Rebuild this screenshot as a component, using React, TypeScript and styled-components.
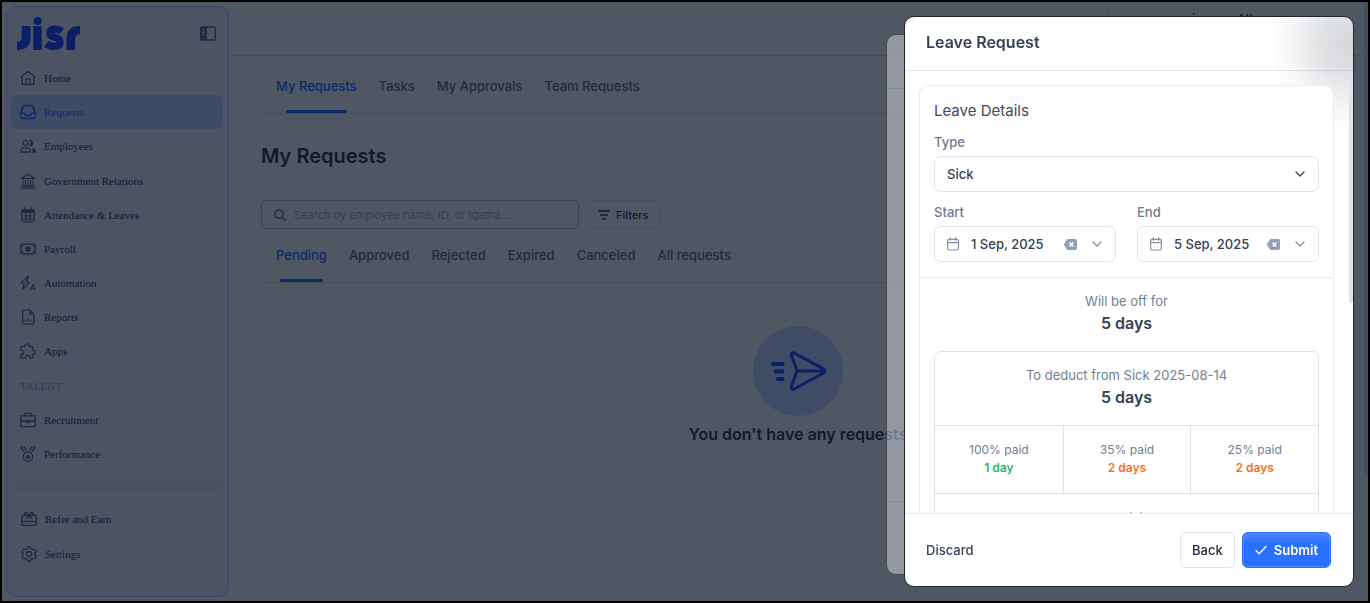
import React from "react";
import styled, { createGlobalStyle, css } from "styled-components";

const sans = `Inter, "Open Sans", "Liberation Sans", sans-serif`;
const serif = `"Liberation Serif", serif`;

const c = {
  page: "#4f5763",
  side: "#4c5362",
  sideLine: "#37476f",
  active: "#3f4b64",
  blue: "#0b2a6f",
  logo: "#0a1f66",
  ink: "#101a2e",
  inkSoft: "#212b3d",
  line: "#454d5a",
};

const Global = createGlobalStyle`
  * { box-sizing: border-box; }
  html, body { margin: 0; height: 100%; }
  body { background: #000; font-family: ${sans}; }
  button, input, select { font-family: inherit; margin: 0; }
  h1, h2, h3, p { margin: 0; }
`;

const Shell = styled.div`
  display: flex;
  height: 100vh;
  min-height: 600px;
  border: 2px solid #000;
  background: ${c.page};
  overflow: hidden;
`;

const Sidebar = styled.aside`
  display: flex;
  flex-direction: column;
  flex: 0 0 223px;
  margin: 4px 3px 4px 4px;
  padding: 10px 5px 25px 4px;
  border: 1px solid ${c.sideLine};
  border-radius: 10px;
  background: ${c.side};
`;

const SideHead = styled.div`
  display: flex;
  justify-content: space-between;
  height: 34px;
  margin: 0 7px 10px 6px;
  color: ${c.inkSoft};
`;

const PlainButton = styled.button`
  display: inline-flex;
  align-items: center;
  justify-content: center;
  flex: none;
  padding: 0;
  border: 0;
  background: none;
  color: inherit;
  cursor: pointer;
`;

const Nav = styled.nav`
  display: flex;
  flex-direction: column;
  flex: 1;
`;

const NavLink = styled.a<{ $active?: boolean }>`
  display: flex;
  align-items: center;
  flex: 1;
  gap: 8px;
  padding: 0 9px;
  border-radius: 7px;
  font: 400 11px/16px ${serif};
  color: ${(p) => (p.$active ? c.blue : c.ink)};
  background: ${(p) => (p.$active ? c.active : "transparent")};
  text-decoration: none;
  svg {
    flex: none;
    color: ${(p) => (p.$active ? c.blue : c.inkSoft)};
  }
`;

const NavHeading = styled.div`
  display: flex;
  align-items: center;
  flex: 1;
  padding: 0 9px;
  font: 400 11px/16px ${serif};
  color: #353d50;
`;

const Fade = styled.div`
  height: 20px;
  margin-bottom: 10px;
  border-radius: 0 0 10px 10px;
  background: linear-gradient(#4c5362, #495060);
`;

const SideFoot = styled.nav`
  display: flex;
  flex-direction: column;
  height: 70px;
  padding-left: 1px;
`;

const Main = styled.main`
  display: flex;
  flex-direction: column;
  flex: 1;
  min-width: 0;
`;

const TopBar = styled.header`
  display: flex;
  flex: none;
  justify-content: flex-end;
  height: 54px;
  padding: 7px 0;
  border-bottom: 1px solid ${c.line};
`;

const Profile = styled.div`
  width: 256px;
  padding: 1px 0 0 83px;
  border-left: 1px solid #424a58;
  font: 500 13px/18px ${sans};
  color: ${c.ink};
`;

const Content = styled.div`
  padding: 0 29px;
`;

const TabBar = styled.nav<{ $short?: boolean }>`
  display: flex;
  gap: 22px;
  height: ${(p) => (p.$short ? 54 : 58)}px;
  padding: ${(p) => (p.$short ? 16 : 20)}px 15px 0;
  border-bottom: 1px solid ${c.line};
`;

const Tab = styled.a<{ $active?: boolean; $inset?: string }>`
  position: relative;
  font: 500 13px/20px ${sans};
  color: ${(p) => (p.$active ? c.blue : c.inkSoft)};
  text-decoration: none;
  white-space: nowrap;
  ${(p) =>
    p.$active &&
    css`
      &::after {
        content: "";
        position: absolute;
        bottom: 0;
        left: ${p.$inset};
        right: ${p.$inset};
        height: 3px;
        border-radius: 2px;
        background: ${c.blue};
      }
    `}
`;

const Title = styled.h1`
  margin: 29px 0 31px;
  font: 600 20px/26px ${sans};
  color: ${c.ink};
`;

const Tools = styled.div`
  display: flex;
  gap: 7px;
`;

const Search = styled.label`
  display: flex;
  align-items: center;
  gap: 8px;
  width: 318px;
  height: 29px;
  padding: 0 12px;
  border: 1px solid #3a4558;
  border-radius: 5px;
  color: ${c.inkSoft};
  input {
    flex: 1;
    min-width: 0;
    padding: 0;
    border: 0;
    outline: 0;
    background: none;
    font: 400 11px/16px ${sans};
    color: ${c.ink};
  }
  input::placeholder {
    color: #353e50;
    opacity: 1;
  }
`;

const FilterButton = styled.button`
  display: flex;
  align-items: center;
  gap: 6px;
  height: 29px;
  padding: 0 11px;
  border: 1px solid #48505e;
  border-radius: 7px;
  background: none;
  font: 500 11px/16px ${sans};
  color: ${c.ink};
`;

const Empty = styled.section`
  display: flex;
  flex-direction: column;
  align-items: center;
  gap: 7px;
  padding-top: 43px;
  font: 600 16px/22px ${sans};
  color: ${c.ink};
`;

const Disc = styled.div`
  display: grid;
  place-items: center;
  width: 90px;
  height: 90px;
  border-radius: 50%;
  background: #404b66;
  color: ${c.logo};
`;

const PageScroll = styled.div`
  width: 4px;
  height: 79%;
  background: #464d5f;
`;

const Layer = styled.div`
  position: fixed;
  inset: 16px 16px 16px auto;
  width: 450px;
`;

const GhostPanel = styled.div`
  position: absolute;
  top: 18px;
  bottom: 12px;
  left: -18px;
  width: 60px;
  border: 1px solid #434a56;
  border-radius: 10px;
  background: rgba(222, 224, 230, 0.48);
  &::before,
  &::after {
    content: "";
    position: absolute;
    left: 0;
    right: 0;
    height: 1px;
    background: #868b98;
  }
  &::before {
    top: 53px;
  }
  &::after {
    bottom: 72px;
  }
`;

const Dialog = styled.section`
  position: relative;
  display: flex;
  flex-direction: column;
  height: 100%;
  border: 1px solid #20262f;
  border-radius: 10px;
  background: #fff;
  overflow: hidden;
`;

const Smudge = styled.div`
  position: absolute;
  top: -64px;
  right: -76px;
  width: 160px;
  height: 180px;
  background: radial-gradient(
    closest-side,
    rgba(92, 98, 110, 0.25),
    rgba(92, 98, 110, 0.19) 35%,
    rgba(92, 98, 110, 0.06) 72%,
    rgba(92, 98, 110, 0)
  );
`;

const DialogHead = styled.header`
  flex: none;
  height: 54px;
  padding: 13px 21px;
  border-bottom: 1px solid #e2e7ed;
  h2 {
    font: 600 16px/24px ${sans};
    color: #374151;
  }
`;

const Body = styled.div`
  position: relative;
  flex: 1;
  min-height: 0;
  padding: 14px 19px 0 14px;
  overflow: hidden;
`;

const BodyScroll = styled.div`
  position: absolute;
  top: 0;
  right: 0;
  width: 4px;
  height: 232px;
  border-radius: 2px;
  background: #dfe2e8;
`;

const Card = styled.div`
  position: relative;
  border: 1px solid #e9ebee;
  border-radius: 10px;
  background: #fff;
`;

const FormPart = styled.div`
  padding: 14px 14px 15px;
  border-bottom: 1px solid #e5e8ec;
  h3 {
    font: 400 15px/22px ${sans};
    color: #3f4a5c;
  }
`;

const Label = styled.label`
  display: block;
  padding: 11px 0 5px;
  font: 500 13px/18px ${sans};
  color: #6e7b8f;
`;

const Control = styled.div<{ $strong?: boolean }>`
  display: flex;
  align-items: center;
  gap: 12px;
  height: 36px;
  padding: 0 13px 0 12px;
  border: 1px solid #e0e5ec;
  border-radius: 7px;
  background: #fff;
  color: ${(p) => (p.$strong ? "#374151" : "#8491a5")};
  svg {
    flex: none;
  }
  button {
    margin-right: 3px;
  }
  select,
  input {
    flex: 1;
    width: 0;
    min-width: 0;
    padding: 0;
    border: 0;
    outline: 0;
    appearance: none;
    background: none;
    font: 500 13px/20px ${sans};
    color: #374151;
  }
`;

const DateRow = styled.div`
  display: grid;
  grid-template-columns: 1fr 1fr;
  gap: 21px;
`;

const Total = styled.div`
  padding: 13px 0 16px;
  text-align: center;
  font: 400 13px/20px ${sans};
  color: #727e90;
  strong {
    display: block;
    font: 600 16px/24px ${sans};
    color: #374151;
  }
`;

const Deduct = styled.div`
  margin: 0 14px 14px;
  border: 1px solid #dfe3e9;
  border-radius: 7px;
`;

const Split = styled.div`
  display: grid;
  grid-template-columns: repeat(3, 1fr);
  border-top: 1px solid #dfe3e9;
  border-bottom: 1px solid #dfe3e9;
`;

const Rate = styled.div<{ $tone: string }>`
  padding: 15px 0 16px;
  text-align: center;
  font: 400 12px/18px ${sans};
  color: #727e90;
  & + & {
    border-left: 1px solid #dfe3e9;
  }
  strong {
    display: block;
    font: 600 12px/18px ${sans};
    color: ${(p) => p.$tone};
  }
`;

const Rest = styled(Total)`
  padding-top: 14px;
`;

const DialogFoot = styled.footer`
  display: flex;
  align-items: center;
  flex: none;
  gap: 7px;
  height: 73px;
  padding: 0 22px 0 21px;
  border-top: 1px solid #e5e8ec;
`;

const Discard = styled(PlainButton)`
  margin-right: auto;
  font: 500 13px/20px ${sans};
  color: #374151;
`;

const Button = styled.button<{ $primary?: boolean }>`
  display: flex;
  align-items: center;
  gap: 7px;
  height: 36px;
  padding: 0 11px;
  border-radius: 6px;
  border: 1px solid #e0e5ec;
  background: #fff;
  font: 500 13px/20px ${sans};
  color: #222c3c;
  ${(p) =>
    p.$primary &&
    css`
      padding: 0 12px;
      border-color: #2a6df5;
      background: linear-gradient(#4a84ff, #2a70ff 35%, #2a70ff);
      box-shadow: inset 0 0 0 1px #4f88ff;
      font-weight: 600;
      color: #fff;
    `}
`;

type IconProps = { w?: number; h?: number; sw?: number; children: React.ReactNode };

const Icon = ({ w = 16, h = 16, sw = 1.3, children }: IconProps) => (
  <svg
    width={w}
    height={h}
    viewBox={`0 0 ${w} ${h}`}
    fill="none"
    stroke="currentColor"
    strokeWidth={sw}
    strokeLinecap="round"
    strokeLinejoin="round"
    aria-hidden="true"
  >
    {children}
  </svg>
);

const solid = { fill: "currentColor", stroke: "none" };

const icons = {
  home: (
    <Icon sw={1.2}>
      <path d="M.7 7.4 8 1.3l7.3 6.1M2.3 6.2v8.2h11.4V6.2M5.9 14.4V8.9h4.2v5.5" />
    </Icon>
  ),
  inbox: (
    <Icon sw={1.5}>
      <path d="M.9 9.3 2.7 2.7Q3 1.6 4.1 1.6h7.8q1.1 0 1.4 1.1l1.8 6.6v3.6q0 1.5-1.5 1.5H2.4Q.9 14.4.9 12.9zM.9 9.3h3.6q.5 2.3 3.5 2.3t3.5-2.3h3.6" />
    </Icon>
  ),
  people: (
    <Icon>
      <circle cx="5.6" cy="5" r="2.6" />
      <path d="M.8 14v-1.2q0-3 4.8-3t4.8 3V14z" />
      <path {...solid} d="M9 1.9a3.3 3.3 0 1 1 0 6.3q1.4-1.3 1.4-3.2T9 1.9zM11.8 9.7q4.2.6 4.2 3.3v1.700h-3.4v-1.9q0-1.9-.8-3.1z" />
    </Icon>
  ),
  bank: (
    <Icon sw={1.2}>
      <path d="M1 5.3 8 1.3l7 4zM.7 15.2h14.6M1.6 13.2h12.8M3 7v5M5.6 7v5M8.1 7v5M10.6 7v5M13 7v5" />
    </Icon>
  ),
  calendar: (
    <Icon sw={1.2}>
      <path {...solid} d="M1.2 3.5Q1.2 2 2.7 2h10.6q1.5 0 1.5 1.5V6H1.2z" />
      <path d="M1.8 3.5v10q0 1.5 1.5 1.5h9.4q1.5 0 1.5-1.5v-10M4.5.8V3M11.5.8V3M1.8 9h12.4M1.8 12h12.4M5.9 6v9M10.1 6v9" />
    </Icon>
  ),
  cash: (
    <Icon sw={1.4}>
      <rect x=".9" y="3.3" width="14.2" height="9.4" rx="1" />
      <circle {...solid} cx="8" cy="8" r="2.7" />
      <path d="M1.5 5.5 3 4M14.5 5.5 13 4M1.5 10.5 3 12M14.5 10.5 13 12" />
    </Icon>
  ),
  bolt: (
    <Icon sw={1.2}>
      <path d="M8.3 1.2.9 8h3.3l-1.5 6.5L9.5 7.3H6.6zM10.3 15l2.6-5.3 2.5 5.3M11.2 13.5h3.4" />
    </Icon>
  ),
  report: (
    <Icon>
      <path d="M9.5.9H4.2q-1.5 0-1.5 1.5v11.2q0 1.5 1.5 1.5h8q1.5 0 1.5-1.5V5z" />
      <path {...solid} d="M9.3.5 14.2 5.4H9.3z" />
      <path d="M5.6 10.8v1.8M8.2 9v3.6M10.8 10.2v2.4" strokeLinecap="butt" />
    </Icon>
  ),
  puzzle: (
    <Icon>
      <path d="M2 3.6h3.3v-.8a2 2 0 0 1 4 0v.8h3.3v3.7h.8a1.9 1.9 0 0 1 0 3.8h-.8v4H9.5v-1a1.9 1.9 0 0 0-3.8 0v1H.9v-3.9h.9a1.9 1.9 0 0 0 0-3.8H.9V3.6z" />
    </Icon>
  ),
  briefcase: (
    <Icon>
      <rect x=".8" y="3.8" width="14.4" height="10.8" rx="1.3" />
      <path d="M5 3.8V2q0-.8.8-.8h4.4q.8 0 .8.8v1.8M.8 9h14.4" />
      <path {...solid} d="M5.8 9h4.4q0 2.2-2.2 2.2T5.8 9z" />
    </Icon>
  ),
  medal: (
    <Icon sw={1.2}>
      <circle cx="8" cy="10.6" r="4.7" />
      <path d="M3.8 5.8.8.8h3.4l2 3.6M12.2 5.8l3-5h-3.4l-2 3.6" />
      <path {...solid} d="m8 7.9.9 1.8 1.9.2-1.4 1.3.4 1.9L8 12.2l-1.8.9.4-1.9-1.4-1.3 1.9-.2z" />
    </Icon>
  ),
  gift: (
    <Icon>
      <rect x=".8" y="4.3" width="14.4" height="10" rx="1.4" />
      <path d="M.8 10.5h14.4M8 4.3Q5.9.8 4.3 1.7q-1.6 1.1.6 2.6M8 4.3Q10.1.8 11.7 1.7q1.6 1.1-.6 2.6M8 4.5 5.5 7.2M8 4.5l2.5 2.7" />
    </Icon>
  ),
  gear: (
    <Icon>
      <path d="M6.8.9h2.4l.6 1.9 1.4.8 2-.5 1.2 1.3.8 1.3-1.4 1.5v1.6l1.4 1.5-.8 1.4-1.2 1.2-2-.5-1.4.8-.6 1.9H6.8l-.6-1.9-1.4-.8-2 .5-1.2-1.2-.8-1.4 1.4-1.5V7.2L.8 5.7l.8-1.3 1.2-1.3 2 .5 1.4-.8z" />
      <circle cx="8" cy="8" r="2.5" />
    </Icon>
  ),
};

const Chevron = () => (
  <Icon w={10} h={10} sw={1.3}>
    <path d="m1 3 4 4 4-4" />
  </Icon>
);

const Logo = () => (
  <svg width="64" height="34" viewBox="0 0 64 34" fill={c.logo} role="img" aria-label="jisr">
    <path d="M4.7 9h8.8v12q0 12-13.5 12v-8.2q4.7 0 4.7-4.8z" />
    <rect x="16.3" y="9" width="8.4" height="24" />
    <circle cx="20.6" cy="4" r="4" />
    <path
      d="M44.5 14.5Q42 12.2 37.8 12.2q-5 0-5 4.1 0 2.9 4.8 4 5.4 1.2 5.4 4.6 0 4.5-5.6 4.5-4.7 0-8-2.6"
      fill="none"
      stroke={c.logo}
      strokeWidth="7.2"
    />
    <path d="M49.5 33V22q0-13 13.5-13v8.2q-5 0-5 5.3V33z" />
  </svg>
);

const menu: [React.ReactNode, string][] = [
  [icons.home, "Home"],
  [icons.inbox, "Requests"],
  [icons.people, "Employees"],
  [icons.bank, "Government Relations"],
  [icons.calendar, "Attendance & Leaves"],
  [icons.cash, "Payroll"],
  [icons.bolt, "Automation"],
  [icons.report, "Reports"],
  [icons.puzzle, "Apps"],
];

const DateField = ({ id, label, value }: { id: string; label: string; value: string }) => (
  <div>
    <Label htmlFor={id}>{label}</Label>
    <Control>
      <Icon w={12} h={14} sw={1.2}>
        <path d="M2 2.4h8q1.4 0 1.4 1.4v7.8q0 1.4-1.4 1.4H2Q.6 13 .6 11.6V3.8Q.6 2.4 2 2.4zM.6 5.6h10.8M3.4.7v2.6M8.6.7v2.6" />
      </Icon>
      <input id={id} type="text" defaultValue={value} />
      <PlainButton type="button" aria-label={`Clear ${label}`}>
        <svg width="13" height="11" viewBox="0 0 13 11" aria-hidden="true">
          <path d="M4.3 0H11q2 0 2 2v7q0 2-2 2H4.3q-.8 0-1.3-.6L.3 6.5q-.6-1 0-2L3 .6Q3.5 0 4.3 0z" fill="#94a0b2" />
          <path d="m5.6 3.6 3.8 3.8M9.4 3.6 5.6 7.4" stroke="#fff" strokeWidth="1.4" />
        </svg>
      </PlainButton>
      <Chevron />
    </Control>
  </div>
);

export default function App() {
  return (
    <>
      <Global />
      <Shell>
        <Sidebar>
          <SideHead>
            <Logo />
            <PlainButton type="button" aria-label="Toggle sidebar">
              <Icon>
                <rect x=".7" y="1" width="14.6" height="13" rx="1.3" />
                <path {...solid} d="M.7 1h6.2v13H.7z" />
                <path d="M2.5 3.8h1.8M2.5 6.3h1.8M2.5 8.8h1.8" stroke={c.side} />
              </Icon>
            </PlainButton>
          </SideHead>
          <Nav>
            {menu.map(([icon, text]) => (
              <NavLink key={text} href="#" $active={text === "Requests"}>
                {icon}
                {text}
              </NavLink>
            ))}
            <NavHeading>TALENT</NavHeading>
            <NavLink href="#">{icons.briefcase}Recruitment</NavLink>
            <NavLink href="#">{icons.medal}Performance</NavLink>
          </Nav>
          <Fade />
          <SideFoot>
            <NavLink href="#">{icons.gift}Refer and Earn</NavLink>
            <NavLink href="#">{icons.gear}Settings</NavLink>
          </SideFoot>
        </Sidebar>
        <Main>
          <TopBar>
            <Profile>iyanna Alt</Profile>
          </TopBar>
          <Content>
            <TabBar>
              {["My Requests", "Tasks", "My Approvals", "Team Requests"].map((t, i) => (
                <Tab key={t} href="#" $active={i === 0} $inset="12%">
                  {t}
                </Tab>
              ))}
            </TabBar>
            <Title>My Requests</Title>
            <Tools>
              <Search>
                <Icon w={12} h={12} sw={1.3}>
                  <circle cx="5" cy="5" r="4.2" />
                  <path d="m8.2 8.2 3.2 3.2" />
                </Icon>
                <input
                  type="text"
                  aria-label="Search requests"
                  placeholder="Search by employee name, ID, or Iqama..."
                />
              </Search>
              <FilterButton type="button">
                <Icon w={12} h={12} sw={1.3}>
                  <path d="M.7 2h10.6M2.6 6h6.8M4.6 10h2.8" />
                </Icon>
                Filters
              </FilterButton>
            </Tools>
            <TabBar $short>
              {["Pending", "Approved", "Rejected", "Expired", "Canceled", "All requests"].map((t, i) => (
                <Tab key={t} href="#" $active={i === 0} $inset="8%">
                  {t}
                </Tab>
              ))}
            </TabBar>
            <Empty>
              <Disc>
                <Icon w={58} h={40} sw={3}>
                  <path d="M22.5 4.5Q21.5.5 25.5 2.2L54 17.6Q58 20 54 22.4L25.5 37.8Q21.5 39.5 22.5 35.5L28 20zM28 20h28" />
                  <path d="M4 13h9.5M6.500 20.5h7M9 28h4.5" strokeWidth="4" />
                </Icon>
              </Disc>
              <p>You don't have any requests</p>
            </Empty>
          </Content>
        </Main>
        <PageScroll />
      </Shell>
      <Layer>
        <GhostPanel />
        <Dialog role="dialog" aria-label="Leave Request">
          <Smudge />
          <DialogHead>
            <h2>Leave Request</h2>
          </DialogHead>
          <Body>
            <Card>
              <FormPart>
                <h3>Leave Details</h3>
                <Label htmlFor="type">Type</Label>
                <Control $strong>
                  <select id="type" defaultValue="Sick">
                    <option>Sick</option>
                  </select>
                  <Chevron />
                </Control>
                <DateRow>
                  <DateField id="start" label="Start" value="1 Sep, 2025" />
                  <DateField id="end" label="End" value="5 Sep, 2025" />
                </DateRow>
              </FormPart>
              <Total>
                Will be off for
                <strong>5 days</strong>
              </Total>
              <Deduct>
                <Total>
                  To deduct from Sick 2025-08-14
                  <strong>5 days</strong>
                </Total>
                <Split>
                  <Rate $tone="#1fb871">
                    100% paid<strong>1 day</strong>
                  </Rate>
                  <Rate $tone="#f0702a">
                    35% paid<strong>2 days</strong>
                  </Rate>
                  <Rate $tone="#f0702a">
                    25% paid<strong>2 days</strong>
                  </Rate>
                </Split>
                <Rest>Remaining</Rest>
              </Deduct>
            </Card>
            <BodyScroll />
          </Body>
          <DialogFoot>
            <Discard type="button">Discard</Discard>
            <Button type="button">Back</Button>
            <Button type="button" $primary>
              <Icon w={12} h={12} sw={1.3}>
                <path d="m1 6.5 3.2 3.2L11 2.5" />
              </Icon>
              Submit
            </Button>
          </DialogFoot>
        </Dialog>
      </Layer>
    </>
  );
}
